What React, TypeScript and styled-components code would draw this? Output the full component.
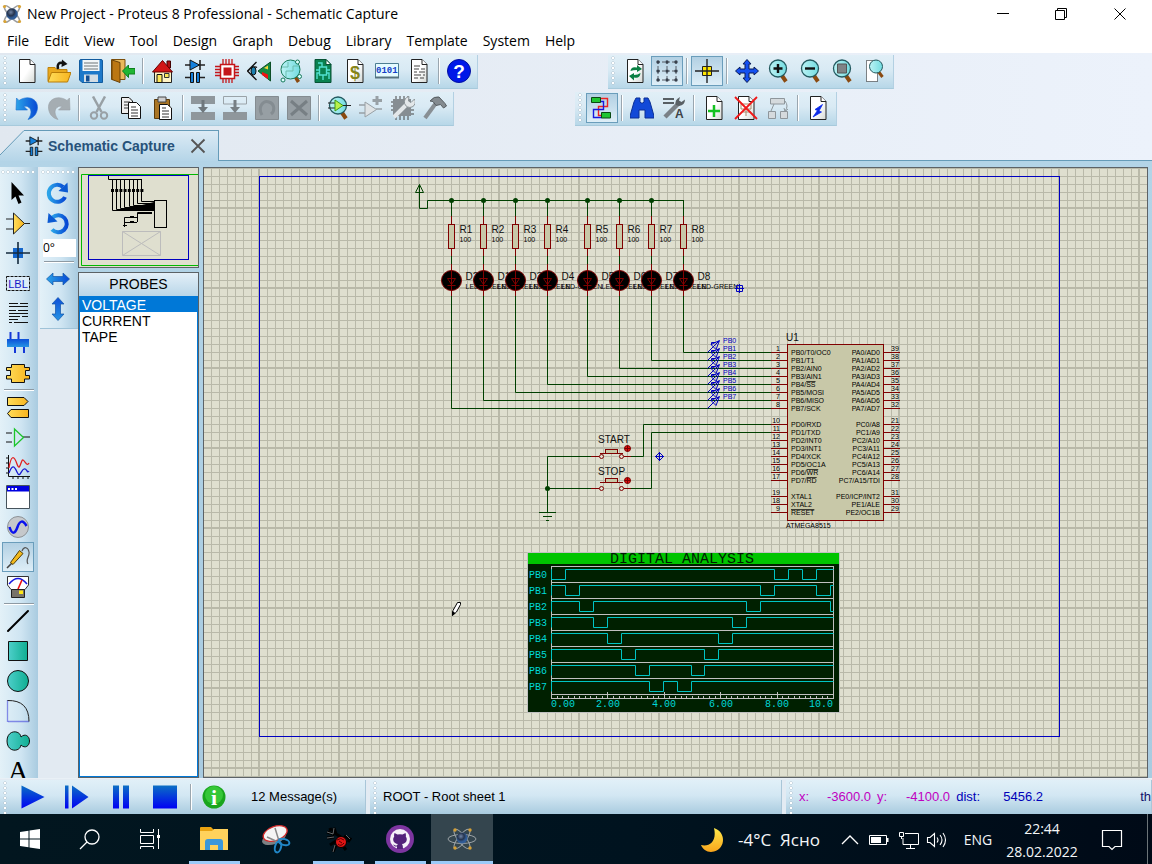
import React from "react";
import styled, { createGlobalStyle, css } from "styled-components";

const uiFont = '"Open Sans", "Noto Sans", sans-serif';
const sansFont = '"Liberation Sans", Arial, sans-serif';
const monoFont = '"Liberation Mono", monospace';

const wire = "#004000";
const pinRed = "#800000";
const markBlue = "#0000c0";

const GlobalStyle = createGlobalStyle`
  * { box-sizing: border-box; }
  body { margin: 0; overflow: hidden; font-family: ${uiFont}; color: #000; }
  button, input { font: inherit; color: inherit; }
`;

/* ---------- frame ---------- */

const Shell = styled.div`
  display: flex;
  flex-direction: column;
  height: 100vh;
  background: linear-gradient(90deg, #e1e8f0, #ecf2fb);
`;

const PaintDefs = styled.svg`
  display: block;
  width: 0;
  height: 0;
  flex: none;
`;

const TitleBar = styled.header`
  display: flex;
  align-items: center;
  flex: none;
  height: 28px;
  padding: 0 3px 0 2px;
  background: #fff;
`;

const Title = styled.h1`
  flex: 1;
  margin: 0 0 0 5px;
  font-size: 14px;
  font-weight: 400;
  line-height: 28px;
  white-space: nowrap;
`;

const WindowButton = styled.button`
  display: grid;
  place-items: center;
  width: 58px;
  height: 28px;
  padding: 0;
  border: 0;
  background: none;
`;

const MenuBar = styled.nav`
  display: flex;
  flex: none;
  height: 25px;
  background: #fff;
`;

const MenuButton = styled.button`
  padding: 0 8px 0 7px;
  border: 0;
  background: none;
  font-size: 14px;
  line-height: 26px;
`;

const Dock = styled.div`
  display: flex;
  flex-direction: column;
  flex: none;
  gap: 3px;
  padding-top: 2px;
`;

const DockRow = styled.div`
  display: flex;
`;

const Strip = styled.div<{ $offset?: number }>`
  display: flex;
  align-items: center;
  height: 34px;
  margin-left: ${(p) => p.$offset ?? 0}px;
  padding: 0 2px 2px 0;
  border-right: 1px solid #b3d0e2;
  border-bottom: 1px solid #a7cadc;
  background: linear-gradient(#e1eff7, #d9eaf4 45%, #b7d7e8);
`;

const Grip = styled.span<{ $wide?: boolean }>`
  flex: none;
  ${(p) =>
    p.$wide
      ? css`
          width: 100%;
          height: 11px;
          background: radial-gradient(circle at 2px 2px, #fff 1px, #b9c6d0 1px, transparent 2px) 1px 3px / 5px 5px repeat-x;
        `
      : css`
          align-self: stretch;
          width: 11px;
          background: radial-gradient(circle at 2px 2px, #fff 1px, #b3c0ca 1px, transparent 2px) 3px 1px / 5px 5px repeat-y;
        `}
`;

const ToolButton = styled.button<{ $on?: boolean }>`
  display: grid;
  place-items: center;
  flex: none;
  width: 32px;
  height: 30px;
  padding: 0;
  border: 1px solid ${(p) => (p.$on ? "#6a9dbb" : "transparent")};
  background: ${(p) => (p.$on ? "linear-gradient(#b2d0e3, #deeef7)" : "none")};
`;

const Divider = styled.span<{ $across?: boolean }>`
  flex: none;
  ${(p) =>
    p.$across
      ? css`
          align-self: stretch;
          height: 2px;
          margin: 1px 2px 1px 4px;
          border-top: 1px solid #8e9aa3;
          border-bottom: 1px solid #fff;
        `
      : css`
          width: 2px;
          height: 26px;
          margin: 0 3px;
          border-left: 1px solid #9aa6af;
          border-right: 1px solid #fff;
        `}
`;

const TabRow = styled.div`
  display: flex;
  flex: none;
  height: 31px;
  margin-top: 4px;
`;

const TabSlope = styled.svg`
  display: block;
  flex: none;
  width: 24px;
  height: 31px;
`;

const Tab = styled.div`
  display: flex;
  align-items: center;
  width: 195px;
  border-top: 1px solid #659bb8;
  border-right: 1px solid #659bb8;
  background: linear-gradient(#dcebf5, #b5d5e8);
`;

const TabLabel = styled.span`
  flex: 1;
  margin-left: 4px;
  color: #27527a;
  font: 700 14px/28px ${sansFont};
  white-space: nowrap;
`;

const TabClose = styled.button`
  display: grid;
  place-items: center;
  width: 24px;
  height: 28px;
  margin-right: 8px;
  padding: 0;
  border: 0;
  background: none;
`;

const TabRule = styled.span`
  flex: 1;
  border-bottom: 1px solid #659bb8;
`;

const Workspace = styled.main`
  display: flex;
  flex: 1;
  min-height: 0;
  padding: 6px 4px 0 0;
  background: linear-gradient(#b3d4e7, #a9cbe0);
`;

/* ---------- left tools ---------- */

const ToolColumns = styled.div`
  display: flex;
  flex: none;
  gap: 2px;
  width: 78px;
  overflow: hidden;
  background: #e2eaf2;
`;

const ToolColumn = styled.div`
  display: flex;
  flex-direction: column;
  align-items: center;
  align-self: flex-start;
  width: 38px;
  padding-right: 2px;
  background: linear-gradient(90deg, #e3f1f8, #cfe5f2 55%, #a9cbe0);
`;

const OrientColumn = styled(ToolColumn)`
  height: 162px;
  border-bottom: 1px solid #9fc3d8;
`;

const AngleInput = styled.input`
  width: 33px;
  height: 18px;
  margin: 1px 0 3px 3px;
  padding: 0;
  border: 0;
  background: #fff;
  font-size: 12px;
  line-height: 18px;
`;

const SidePanel = styled.aside`
  display: flex;
  flex-direction: column;
  flex: none;
  gap: 4px;
  width: 121px;
`;

const Overview = styled.svg`
  display: block;
  flex: none;
  width: 121px;
  height: 101px;
  border: 1px solid #5c6266;
  background: #dfdfcf;
`;

const Selector = styled.section`
  flex: 1;
  min-height: 0;
  border: 1px solid #5c6266;
  background: #fff;
`;

const SelectorTitle = styled.h2`
  margin: 0;
  height: 23px;
  background: linear-gradient(#e3eff8, #b9d6e8);
  font: 400 14px/23px ${sansFont};
  text-align: center;
`;

const ProbeList = styled.ul`
  height: calc(100% - 23px);
  margin: 0;
  padding: 0;
  border: 1px solid #0078d7;
  border-top: 0;
  list-style: none;
`;

const Probe = styled.button<{ $on?: boolean }>`
  display: flex;
  align-items: flex-start;
  width: 100%;
  height: 16px;
  padding: 0 2px;
  border: 0;
  background: ${(p) => (p.$on ? "#0078d7" : "none")};
  color: ${(p) => (p.$on ? "#fff" : "#000")};
  font: 14px/18px ${sansFont};
  text-align: left;
`;

const Canvas = styled.section`
  flex: 1;
  min-width: 0;
  margin-left: 4px;
  overflow: hidden;
  border: 1px solid #5c6266;
  background: #dfdfcf;
`;

const Sheet = styled.svg`
  display: block;
  width: 100%;
  height: 100%;
`;

/* ---------- status bar ---------- */

const StatusBar = styled.footer`
  display: flex;
  flex: none;
  gap: 4px;
  height: 36px;
  padding-top: 1px;
  border-top: 1px solid #e9f0f6;
  background: #e3ebf3;
  font: 13px/34px ${sansFont};
`;

const StatusPart = styled.div<{ $grow?: boolean; $width?: number }>`
  display: flex;
  align-items: center;
  flex: ${(p) => (p.$grow ? "1" : "none")};
  width: ${(p) => (p.$width ? `${p.$width}px` : "auto")};
  overflow: hidden;
  border-right: 1px solid #a9c6d8;
  background: linear-gradient(#e1f0f8, #d3e7f3 45%, #a9cbdf);
  white-space: nowrap;
`;

const StatusText = styled.span`
  display: flex;
  flex: 1;
  padding-left: 2px;
`;

const SimButton = styled.button`
  display: grid;
  place-items: center;
  width: 44px;
  height: 32px;
  padding: 0;
  border: 0;
  background: none;
`;

const Messages = styled.button`
  display: flex;
  align-items: center;
  gap: 25px;
  padding: 0 7px;
  border: 0;
  background: none;
`;

const Coordinate = styled.span<{ $width: number; $blue?: boolean; $right?: boolean }>`
  flex: none;
  width: ${(p) => p.$width}px;
  color: ${(p) => (p.$blue ? "#0000b8" : "#c000c0")};
  text-align: ${(p) => (p.$right ? "right" : "left")};
`;

const Unit = styled.span`
  margin-left: auto;
  color: #10106a;
`;

/* ---------- taskbar ---------- */

const Taskbar = styled.nav`
  display: flex;
  flex: none;
  height: 50px;
  background: linear-gradient(90deg, #02161f, #00131f 55%, #000a17);
  color: #f4f6f8;
`;

const TaskButton = styled.button<{ $app?: boolean; $open?: boolean; $active?: boolean }>`
  display: grid;
  place-items: center;
  flex: none;
  width: ${(p) => (p.$app ? 62 : 60)}px;
  padding: 0;
  border: 0;
  background-color: ${(p) => (p.$active ? "#34454e" : "transparent")};
  background-image: ${(p) => (p.$open ? "linear-gradient(#9bcaf8, #9bcaf8)" : "none")};
  background-repeat: no-repeat;
  background-position: center bottom;
  background-size: ${(p) => (p.$active ? "100%" : "51px")} 3px;
`;

const AppGroup = styled.div`
  display: flex;
  margin-left: 3px;
`;

const Tray = styled.div`
  display: flex;
  align-items: center;
  margin-left: auto;
`;

const TrayButton = styled.button<{ $width: number }>`
  display: flex;
  align-items: center;
  justify-content: center;
  flex: none;
  gap: 14px;
  width: ${(p) => p.$width}px;
  height: 50px;
  padding: 1px 0 0;
  border: 0;
  background: none;
  font-size: ${(p) => (p.$width > 100 ? 17 : 14)}px;
  line-height: 23px;
  white-space: nowrap;
`;

const ShowDesktop = styled.button`
  align-self: stretch;
  width: 5px;
  padding: 0;
  border: 0;
  border-left: 1px solid #6b7478;
  background: none;
`;

/* ---------- icons ---------- */

const Icon = ({ size = 24, box = 24, children }: { size?: number; box?: number; children: React.ReactNode }) => (
  <svg width={size} height={size} viewBox={`0 0 ${box} ${box}`} fill="none" stroke="none" aria-hidden="true">
    {children}
  </svg>
);

const Page = () => (
  <>
    <path d="M4.500.500H15l5 5V23.500H4.500Z" fill="url(#paper)" stroke="#222" />
    <path d="M15 .5V5.500H20" fill="#fff" stroke="#222" />
  </>
);

const Lens = () => (
  <>
    <path d="M14.500 16 19 22.500" stroke="#8a4a10" strokeWidth="4" />
    <circle cx="11" cy="9.500" r="8.500" fill="url(#lens)" stroke="#245a60" strokeWidth="1.300" />
  </>
);

const Atom = () => (
  <>
    <g stroke="#9b9da0" strokeWidth="1.600">
      <ellipse cx="12" cy="12" rx="13" ry="3.600" transform="rotate(48 12 12)" />
      <ellipse cx="12" cy="12" rx="13" ry="3.600" transform="rotate(-48 12 12)" />
    </g>
    <circle cx="12" cy="12" r="7" fill="url(#ball)" />
    <g fill="#dba433">
      <circle cx="3" cy="3" r="1.900" />
      <circle cx="21" cy="3" r="1.900" />
      <circle cx="3.500" cy="21" r="1.900" />
      <circle cx="21" cy="21" r="1.900" />
    </g>
  </>
);

const Schematic = () => (
  <>
    <path d="M2 6H22M17 1V11M2 18.500H9M15 18.500H22" stroke="#222" strokeWidth="1.600" />
    <path d="M7 1V11L16.500 6Z" fill="#1580dc" stroke="#111" />
    <path d="M7.500 13.500H10.500V23.500H7.500ZM13.500 13.500H16.500V23.500H13.500Z" fill="#1580dc" stroke="#111" />
  </>
);

const Curl = () => (
  <path d="M1.500 2 4 4.500C12-1 23 2 22.500 12 22 18 18.500 22 13 23.500 16.500 19 17 14 14 11.500 12 9.800 10 10 9 10.500L12.500 14H1Z" />
);

const icons = {
  newPage: <Page />,
  open: (
    <>
      <path d="M1 22V8.500H8L10 10.500H20V22Z" fill="#e9a91e" stroke="#c08108" />
      <path d="M1 23 4.500 13.500H24L20.500 23Z" fill="url(#yellow)" stroke="#b87d08" />
      <path d="M11 10C10 5 12 3 16 4" stroke="#111" strokeWidth="2.500" />
      <path d="M15 .5 20.500 5 14.500 8Z" fill="#111" />
    </>
  ),
  save: (
    <>
      <path d="M.500 2Q.500.500 2 .5H22Q23.500.500 23.500 2V23.500H3L.500 21Z" fill="#1c78c9" stroke="#125b9e" />
      <path d="M3.500 1H20.500V12H3.500Z" fill="#f2f6f8" />
      <path d="M5 4H19M5 7H19M5 10H19" stroke="#6c7479" />
      <path d="M5 15.500H19V23H5Z" fill="#d3dde4" />
      <path d="M7 16.500H10.500V22.500H7Z" fill="#124f94" />
    </>
  ),
  exit: (
    <>
      <path d="M.500.500H14V20.500H.500Z" fill="#e9b95c" stroke="#7b4e0b" />
      <path d="M1 1 9 3.500V23.500L1 20.500Z" fill="#bb7713" stroke="#6a4209" />
      <path d="M11.500 12 17.500 6V9.500H24V15H17.500V18.500Z" fill="#20b634" stroke="#0e7f1d" />
    </>
  ),
  home: (
    <>
      <path d="M3.500 12H20.500V23.500H3.500Z" fill="#fff4c5" stroke="#222" />
      <path d="M16 2H19.500V9H16Z" fill="#b11212" stroke="#400" />
      <path d="M11.500 1.500 1.500 13H21.500Z" fill="#d21616" stroke="#680000" />
      <path d="M6 15.500H11V23.500H6Z" fill="#ffe85a" stroke="#111" />
      <path d="M13.500 14.500H18V18.500H13.500Z" fill="#ffe85a" stroke="#333" />
    </>
  ),
  schematic: <Schematic />,
  chip: (
    <>
      <path d="M8 0V24M11 0V24M14 0V24M17 0V24M0 7.500H24M0 10.500H24M0 13.500H24M0 16.500H24" stroke="#c4161a" strokeWidth="1.300" />
      <path d="M5.500 5.500H19.500V19.500H5.500Z" fill="#fff" stroke="#c4161a" strokeWidth="1.500" />
      <path d="M8.500 8.500H16.500V16.500H8.500Z" fill="#c4161a" />
    </>
  ),
  viewer: (
    <>
      <path d="M9.500 3 .500 12 9.500 21M1 12C4 8 8 7 10 8.500" stroke="#111" strokeWidth="1.300" />
      <ellipse cx="6.500" cy="12" rx="2.500" ry="4" fill="#1a7fae" stroke="#111" />
      <path d="M11 12 23.500 3V22Z" fill="#138a42" stroke="#0c4e26" />
      <path d="M15 13 21 15.500V20L15 16Z" fill="#e11" />
      <path d="M17 9 21 6.500V10.500Z" fill="#f6d73c" />
    </>
  ),
  pcbLens: (
    <>
      <path d="M15.500 16.500 19.500 23" stroke="#8a4a10" strokeWidth="3.500" />
      <circle cx="11.500" cy="10.500" r="9.500" fill="url(#lens)" stroke="#167a5a" />
      <path d="M3 8H9V3M20 7H14V12H7V18" stroke="#6cbcae" />
      <g fill="#dff" stroke="#167a5a">
        <circle cx="18.500" cy="3" r="2" />
        <circle cx="4" cy="21" r="2" />
        <circle cx="20.500" cy="17.500" r="2" />
      </g>
    </>
  ),
  pcbPage: (
    <>
      <path d="M4 .5H15L20 5.500V23.500H4Z" fill="#0a8250" stroke="#075234" />
      <path d="M15 .5V5.500H20Z" fill="#fff" stroke="#075234" />
      <path d="M8.500 8H15.500V16H8.500ZM8.500 11H5M15.500 11H19M8.500 14H6V20M15.500 14H18V20M11 8V4H7M12 16V21" stroke="#52e0cf" strokeWidth="1.400" />
    </>
  ),
  bill: (
    <>
      <Page />
      <text x="12" y="20" textAnchor="middle" fontFamily="Liberation Sans" fontWeight="700" fontSize="18" fill="#87851a">$</text>
    </>
  ),
  binary: (
    <>
      <path d="M.500 4.500H23.500V18.500H.500Z" fill="#e4fbff" stroke="#4d7d92" />
      <path d="M0 18.500H24" stroke="#56727f" strokeWidth="2" />
      <text x="1" y="14" fontFamily="Liberation Mono" fontWeight="700" fontSize="9" fill="#1440c8">0101</text>
    </>
  ),
  report: (
    <>
      <Page />
      <path d="M7 7H13M7 10H12M14 10H18M7 13H10M12 13H18M7 16H14M16 16H18M7 19H11M13 19H17" stroke="#444" strokeWidth="1.200" />
    </>
  ),
  help: (
    <>
      <circle cx="12" cy="12" r="11.500" fill="#0018e8" stroke="#0010a0" />
      <text x="12" y="19" textAnchor="middle" fontFamily="Liberation Sans" fontWeight="700" fontSize="19" fill="#fff">?</text>
    </>
  ),
  undo: (
    <g fill="url(#blueH)" stroke="#1c6fd0" strokeWidth=".6"><Curl /></g>
  ),
  redo: (
    <g fill="#a5adb2" stroke="#98a0a5" strokeWidth=".6" transform="translate(24 0) scale(-1 1)"><Curl /></g>
  ),
  cut: (
    <g stroke="#98a0a5">
      <path d="M6 .5 14.500 16M18 .5 9.500 16" strokeWidth="2.500" />
      <circle cx="7" cy="19.500" r="3.200" strokeWidth="2" />
      <circle cx="17" cy="19.500" r="3.200" strokeWidth="2" />
    </g>
  ),
  copy: (
    <>
      <path d="M2.500 1.500H10L13.500 5V17.500H2.500Z" fill="#eee" stroke="#111" />
      <path d="M5 6H11M5 9H11M5 12H11" stroke="#333" />
      <path d="M9.500 6.500H17.500L21.500 10.500V22.500H9.500Z" fill="#fff" stroke="#111" />
      <path d="M12 11H17M12 14H19M12 17H19M12 20H19" stroke="#333" />
    </>
  ),
  paste: (
    <>
      <path d="M3.500 3.500H18.500V22.500H3.500Z" fill="#a97524" stroke="#5a3b0c" />
      <path d="M7 1H15V6H7Z" fill="#cfcfcf" stroke="#444" />
      <path d="M8.500 8.500H16.500L20.500 12V23.500H8.500Z" fill="#fff" stroke="#111" />
      <path d="M11 12H15M11 15H18M11 18H18M11 21H18" stroke="#333" />
    </>
  ),
  blockCopy: (
    <>
      <path d="M0 0H24V8H0ZM0 16H24V24H0Z" fill="#8f979c" />
      <path d="M12 4V13" stroke="#6f777c" strokeWidth="3" />
      <path d="M7 11H17L12 17Z" fill="#6f777c" />
    </>
  ),
  blockMove: (
    <>
      <path d="M.500.500H23.500V8H.500Z" stroke="#9aa3a8" />
      <path d="M0 16H24V24H0Z" fill="#8f979c" />
      <path d="M12 4V13" stroke="#777f84" strokeWidth="3" />
      <path d="M7 11H17L12 17Z" fill="#777f84" />
    </>
  ),
  blockRotate: (
    <>
      <path d="M.500.500H23.500V23.500H.500Z" fill="#979fa4" stroke="#848c91" />
      <path d="M7 19C2 10 9 4 14 6 20 8 20 15 16 18" stroke="#848c91" strokeWidth="3" />
    </>
  ),
  blockDelete: (
    <>
      <path d="M.500.500H23.500V23.500H.500Z" fill="#979fa4" stroke="#848c91" />
      <path d="M4 5 20 19M20 5 4 19" stroke="#777f84" strokeWidth="3" />
    </>
  ),
  pick: (
    <>
      <Lens />
      <path d="M1 7H8M1 12H8M16 9.500H24" stroke="#222" />
      <path d="M8 4V15L16 9.500Z" fill="#b9f04c" stroke="#3f9d17" />
    </>
  ),
  makePart: (
    <>
      <path d="M0 9H6M0 17H6M17 13H23" stroke="#98a0a5" strokeWidth="1.500" />
      <path d="M6 6V21L17.500 13.500Z" fill="#dfe3e5" stroke="#98a0a5" />
      <path d="M18 0V9M13.500 4.500H23" stroke="#98a0a5" strokeWidth="3" />
    </>
  ),
  packageTool: (
    <>
      <path d="M2 3H20V20H2Z" fill="#868d92" />
      <path d="M5 0V3M9 0V3M13 0V3M17 0V3M5 20V24M9 20V24M13 20V24M17 20V24M0 6H2M0 10H2M0 14H2M20 14H23M20 18H23" stroke="#444" />
      <path d="M3 21 16 8" stroke="#e3e7e9" strokeWidth="4" />
      <path d="M23.500 3A5.500 5.500 0 1 1 18 .5L17.500 5 20 6.500Z" fill="#e3e7e9" stroke="#8a9296" />
    </>
  ),
  hammer: (
    <>
      <path d="M13 7 2 22" stroke="#888f94" strokeWidth="4" />
      <path d="M7 5Q11 0 16 1L22 7.500 23.500 10 20.500 12 17.500 8.500 13 9.500 10 5.500Z" fill="#848b90" stroke="#555c60" />
    </>
  ),
  redraw: (
    <>
      <Page />
      <path d="M7.500 12Q8 7 14 8.500V6L19 10 14 13V11Q10 11 7.500 12ZM17.500 14Q17 20 11 18.500V21.500L6 17 11 14V16Q15 16 17.500 14Z" fill="#0b7f43" />
    </>
  ),
  grid: (
    <>
      <path d="M2 3H22M2 12H22M2 21H22M3 2V22M12 2V22M21 2V22" stroke="#565c66" strokeDasharray="3 2" />
      <g fill="#38404c">
        {[3, 12, 21].map((y) => [3, 12, 21].map((x) => <circle key={`${x}${y}`} cx={x} cy={y} r="1.700" />))}
      </g>
    </>
  ),
  origin: (
    <>
      <path d="M7.500 7.500H16.500V16.500H7.500Z" fill="#ffe600" stroke="#222" />
      <path d="M12 0V24M0 12H24" stroke="#222" strokeWidth="1.400" />
    </>
  ),
  pan: (
    <path d="M12 .5 16 5H14V10H19V8L23.500 12 19 16V14H14V19H16L12 23.500 8 19H10V14H5V16L.500 12 5 8V10H10V5H8Z" fill="#1450f0" stroke="#0a1c58" />
  ),
  zoomIn: (
    <><Lens /><path d="M11 5V14M6.500 9.500H15.500" stroke="#111" strokeWidth="2.400" /></>
  ),
  zoomOut: (
    <><Lens /><path d="M6 9.500H16" stroke="#111" strokeWidth="2.400" /></>
  ),
  zoomAll: (
    <><Lens /><path d="M6.500 5H15.500V14H6.500Z" fill="#7f8487" stroke="#555" /></>
  ),
  zoomArea: (
    <>
      <path d="M3.500 1.500H14.500V22.500H3.500Z" fill="#fff" />
      <path d="M3.500 1.500H14.500V22.500H3.500Z" stroke="#111" strokeDasharray="1 1" />
      <path d="M15 12 19.500 18" stroke="#8a4a10" strokeWidth="3" />
      <circle cx="13" cy="7.500" r="6.500" fill="url(#lens)" stroke="#245a60" />
    </>
  ),
  autoRoute: (
    <>
      <path d="M10 2.500H17.500V10.500H8.500V19.500H13" stroke="#e22" strokeWidth="1.400" />
      <path d="M10 5.500H13.500V13.500H3.500V21.500H12" stroke="#1818e0" strokeWidth="1.400" />
      <path d="M1.500 1.500H10.500V6.500H1.500ZM11.500 16.500H20.500V22H11.500Z" fill="#1fc632" stroke="#0a4912" />
    </>
  ),
  find: (
    <path d="M6 2H10V6L11 7H13L14 6V2H18L20 6 24 20V22H15V14H9V22H0V20L4 6Z" fill="#1249d8" stroke="#0a2f96" />
  ),
  property: (
    <>
      <path d="M1 3H12M1 7H12" stroke="#585f64" strokeWidth="2" />
      <path d="M3 21 17 7" stroke="#7a8187" strokeWidth="4.500" />
      <path d="M14 9Q12 4 18 1L17 4.500 19.500 6 23 3.500Q23 9 17 10Z" fill="#596065" />
      <text x="13" y="22" fontFamily="Liberation Sans" fontWeight="700" fontSize="12" fill="#3e4347">A</text>
    </>
  ),
  newSheet: (
    <><Page /><path d="M12 9V21M6 15H18" stroke="#14c221" strokeWidth="2.500" /></>
  ),
  deleteSheet: (
    <>
      <Page />
      <path d="M7 8H17V13H7ZM9 16H17M12 13V20" stroke="#a88a6a" />
      <path d="M1 1 23 23M23 1 1 23" stroke="#f01818" strokeWidth="1.800" />
    </>
  ),
  hierarchy: (
    <>
      <path d="M4.500 2.500H18.500V8H4.500ZM2.500 15.500H9.500V22.500H2.500ZM14.500 15.500H21.500V22.500H14.500Z" fill="#d5dadd" stroke="#8e969b" />
      <path d="M8 8 5 15M19 5Q23 10 19 15M18 12 19 15.500 22 13" stroke="#8e969b" />
    </>
  ),
  electrical: (
    <><Page /><path d="M16.500 8.500 9 13.500 11.500 14.500 7 21 15.500 16 13 15Z" fill="#0b2ae8" stroke="#0b2ae8" strokeWidth=".8" /></>
  ),
  select: <path d="M5.500 1V19L9.500 15.500 12.500 23 15.500 21.500 12.500 14.500H18Z" fill="#000" />,
  component: (
    <><path d="M0 8H8M0 18H8M18 12.500H24" stroke="#222" /><path d="M7.500 2V23L18.500 12.500Z" fill="url(#yellow)" stroke="#222" /></>
  ),
  junction: (
    <><path d="M7 7H17V17H7Z" fill="#1466cc" /><path d="M12 1V23M0 12H24" stroke="#152a3c" strokeWidth="1.600" /></>
  ),
  label: (
    <>
      <path d="M.500 5.500H23.500V19.500H.500Z" fill="#dcecf8" stroke="#111" strokeDasharray="3 1" />
      <text x="12" y="17" textAnchor="middle" fontFamily="Liberation Sans" fontSize="11" fill="#1818c8">LBL</text>
    </>
  ),
  script: (
    <path d="M3 2.500H12M14 2.500H22M3 5.500H22M3 9.500H10M12 9.500H22M3 12.500H22M3 15.500H14M16 15.500H22M3 18.500H12M3 21.500H6M8 21.500H22" stroke="#111" />
  ),
  bus: (
    <>
      <path d="M4.500 1V9M12.500 1V9M9 15V22M18 15V22" stroke="#1538d8" strokeWidth="2" />
      <path d="M1 8H23V16H1Z" fill="url(#blueV)" />
    </>
  ),
  subcircuit: (
    <path d="M5.500 3.500H18.500V6.500H23.500V9.500H19.500V14.500H23.500V18H18.500V21.500H5.500V18H.500V14.500H4.500V9.500H.500V6.500H5.500Z" fill="url(#yellow)" stroke="#111" />
  ),
  terminal: (
    <path d="M1.500 2.500H18L22 6.500 18 10.500H1.500ZM5 14.500H22.500V22.500H5L1.500 18.500Z" fill="url(#yellow)" stroke="#111" />
  ),
  pin: (
    <><path d="M0 8H6M0 17H6M17 12H24" stroke="#111" /><path d="M8.500 4V21L17.500 12.500Z" stroke="#1cc52c" strokeWidth="1.300" /></>
  ),
  chart: (
    <>
      <path d="M2.500 0V21.500H24M0 3H2M0 8H2M0 13H2M0 18H2M7 21V24M12 21V24M17 21V24M22 21V24" stroke="#111" />
      <path d="M3 13C5 0 8 0 11 9S15 4 17 5 21 12 23 8" stroke="#e12020" strokeWidth="1.300" />
      <path d="M3 18C6 10 8 10 11 17S15 15 18 14 21 19 23 16" stroke="#1818d0" strokeWidth="1.300" />
    </>
  ),
  popup: (
    <>
      <path d="M.500.500H23.500V23.500H.500Z" fill="#fff" stroke="#46535c" />
      <path d="M1 1H23V6.500H1Z" fill="#0000e0" />
      <path d="M2 4H12" stroke="#fff" strokeWidth="2" strokeDasharray="2 1.500" />
    </>
  ),
  generator: (
    <>
      <circle cx="12" cy="12" r="10.500" fill="#c5c8cb" stroke="#8d9296" />
      <path d="M3.500 12C6 20 9 19 11.500 12S17 5 20.500 11" stroke="#0a12ee" strokeWidth="2.500" />
    </>
  ),
  probe: (
    <>
      <path d="M1 23 7 17" stroke="#444" strokeWidth="1.600" />
      <path d="M4.500 17.500 13.500 5.500 17 8.500 7 19.500Z" fill="#f2b91c" stroke="#4f3b06" />
      <path d="M16 6C18 1 22 2 23 7S19 14 22 19" stroke="#555" strokeWidth="1.200" />
    </>
  ),
  instrument: (
    <>
      <path d="M1.500 1.500H22.500V10L19 14.500H5L1.500 10Z" fill="#fff" stroke="#333" />
      <path d="M3 9Q12-2 21 9" stroke="#1717e0" strokeWidth="1.500" />
      <path d="M12 14 16 5" stroke="#e11" strokeWidth="1.600" />
      <path d="M5.500 14.500H18.500V22.500H5.500Z" fill="#77736a" stroke="#222" />
      <path d="M13 15.500H17V19H13Z" fill="#ffe815" />
    </>
  ),
  line: <path d="M2 22 22 2" stroke="#000" strokeWidth="2" strokeLinecap="round" />,
  box: <path d="M2.500 2.500H21.500V21.500H2.500Z" fill="url(#teal)" stroke="#111" />,
  circle: <circle cx="12" cy="12" r="10.500" fill="url(#teal)" stroke="#111" />,
  arc: (
    <>
      <path d="M1.500 1.500V22.500H23" stroke="#2828d8" strokeDasharray="1 1" strokeWidth="1.300" />
      <path d="M1.500 1.500Q23 1 23 22.500" stroke="#222" />
    </>
  ),
  path: (
    <path d="M15 8C14 .5 1 .5 1 12S14 23.500 15 16C19 20 23.500 17 23.500 12S19 4 15 8Z" fill="url(#teal)" stroke="#111" />
  ),
  text: <text x="12" y="21" textAnchor="middle" fontFamily="Liberation Serif" fontSize="28" fill="#000">A</text>,
  clockwise: (
    <>
      <path d="M19 16A8.500 8.500 0 1 1 17 6" stroke="url(#blueH)" strokeWidth="4" />
      <path d="M21.500 1.500 22 11.500 12.500 10Z" fill="#0b5ad2" />
    </>
  ),
  anticlockwise: (
    <>
      <path d="M6 18.500A8.500 8.500 0 1 0 6.500 6.500" stroke="url(#blueH)" strokeWidth="4" />
      <path d="M2.500 2 1.500 12 11.500 10.500Z" fill="#0b5ad2" />
    </>
  ),
  mirrorX: <path d="M.500 12 7 6V9.500H17V6L23.500 12 17 18V14.500H7V18Z" fill="url(#blueH)" stroke="#1255a8" strokeWidth=".7" />,
  mirrorY: <path d="M12 .5 18 7H14.500V17H18L12 23.500 6 17H9.500V7H6Z" fill="url(#blueV)" stroke="#1255a8" strokeWidth=".7" />,
} as const;

type IconName = keyof typeof icons;
type Tool = { icon: IconName; label: string; on?: boolean } | null;

const t = (icon: IconName, label: string, on = false): Tool => ({ icon, label, on });

const fileTools: Tool[] = [
  t("newPage", "New project"), t("open", "Open project"), t("save", "Save project"), t("exit", "Close project"), null,
  t("home", "Home page"), t("schematic", "Schematic capture"), t("chip", "PCB layout"), t("viewer", "3D visualizer"),
  t("pcbLens", "Gerber viewer"), t("pcbPage", "Design explorer"), t("bill", "Bill of materials"), t("binary", "Source code"),
  t("report", "Project notes"), null, t("help", "Help"),
];
const viewTools: Tool[] = [
  t("redraw", "Redraw display"), t("grid", "Toggle grid", true), null, t("origin", "Toggle false origin", true), null,
  t("pan", "Center at cursor"), t("zoomIn", "Zoom in"), t("zoomOut", "Zoom out"), t("zoomAll", "Zoom to view sheet"),
  t("zoomArea", "Zoom to area"),
];
const editTools: Tool[] = [
  t("undo", "Undo"), t("redo", "Redo"), null, t("cut", "Cut"), t("copy", "Copy"), t("paste", "Paste"), null,
  t("blockCopy", "Block copy"), t("blockMove", "Block move"), t("blockRotate", "Block rotate"), t("blockDelete", "Block delete"), null,
  t("pick", "Pick parts"), t("makePart", "Make device"), t("packageTool", "Packaging tool"), t("hammer", "Decompose"),
];
const designTools: Tool[] = [
  t("autoRoute", "Wire autorouter", true), null, t("find", "Search and tag"), t("property", "Property assignment"), null,
  t("newSheet", "New sheet"), t("deleteSheet", "Remove sheet"), t("hierarchy", "Exit to parent"), null,
  t("electrical", "Electrical rules check"),
];
const modeTools: Tool[] = [
  t("select", "Selection"), t("component", "Component"), t("junction", "Junction dot"), t("label", "Wire label"),
  t("script", "Text script"), t("bus", "Buses"), t("subcircuit", "Subcircuit"), null,
  t("terminal", "Terminals"), t("pin", "Device pins"), t("chart", "Graph"), t("popup", "Active popup"),
  t("generator", "Generator"), t("probe", "Probe", true), t("instrument", "Instruments"), null,
  t("line", "2D line"), t("box", "2D box"), t("circle", "2D circle"), t("arc", "2D arc"), t("path", "2D path"), t("text", "2D text"),
];

const Tools = ({ items, across }: { items: Tool[]; across?: boolean }) => (
  <>
    {items.map((item, i) =>
      item ? (
        <ToolButton key={item.icon} aria-label={item.label} aria-pressed={item.on || undefined} $on={item.on}>
          <Icon>{icons[item.icon]}</Icon>
        </ToolButton>
      ) : (
        <Divider key={`divider${i}`} $across={across} />
      )
    )}
  </>
);

/* ---------- schematic ---------- */

// Top left of the visible area, in schematic coordinates.
const view = { x: 204, y: 168 };

const branches = [
  { x: 451, r: "R1", d: "D2" },
  { x: 483, r: "R2", d: "D1" },
  { x: 515, r: "R3", d: "D3" },
  { x: 547, r: "R4", d: "D4" },
  { x: 587, r: "R5", d: "D5" },
  { x: 619, r: "R6", d: "D6" },
  { x: 651, r: "R7", d: "D7" },
  { x: 683, r: "R8", d: "D8" },
];

// [y, number, name, overlined part]
type Pin = [number, number, string, string?];
const leftPins: Pin[] = [
  [352, 1, "PB0/T0/OC0"], [360, 2, "PB1/T1"], [368, 3, "PB2/AIN0"], [376, 4, "PB3/AIN1"],
  [384, 5, "PB4/", "SS"], [392, 6, "PB5/MOSI"], [400, 7, "PB6/MISO"], [408, 8, "PB7/SCK"],
  [424, 10, "PD0/RXD"], [432, 11, "PD1/TXD"], [440, 12, "PD2/INT0"], [448, 13, "PD3/INT1"],
  [456, 14, "PD4/XCK"], [464, 15, "PD5/OC1A"], [472, 16, "PD6/", "WR"], [480, 17, "PD7/", "RD"],
  [496, 19, "XTAL1"], [504, 18, "XTAL2"], [512, 9, "", "RESET"],
];
const rightPins: Pin[] = [
  [352, 39, "PA0/AD0"], [360, 38, "PA1/AD1"], [368, 37, "PA2/AD2"], [376, 36, "PA3/AD3"],
  [384, 35, "PA4/AD4"], [392, 34, "PA5/AD5"], [400, 33, "PA6/AD6"], [408, 32, "PA7/AD7"],
  [424, 21, "PC0/A8"], [432, 22, "PC1/A9"], [440, 23, "PC2/A10"], [448, 24, "PC3/A11"],
  [456, 25, "PC4/A12"], [464, 26, "PC5/A13"], [472, 27, "PC6/A14"], [480, 28, "PC7/A15/TDI"],
  [496, 31, "PE0/ICP/INT2"], [504, 30, "PE1/ALE"], [512, 29, "PE2/OC1B"],
];

const PartName = styled.text`
  font: 10px ${sansFont};
  fill: #101010;
`;

const SmallText = styled.text<{ $blue?: boolean }>`
  font: 7px ${sansFont};
  fill: ${(p) => (p.$blue ? "#0000c0" : "#000")};
`;

const Overlined = styled.tspan`
  text-decoration: overline;
`;

const GraphText = styled.text<{ $title?: boolean }>`
  font: ${(p) => (p.$title ? 15 : 10)}px ${monoFont};
  fill: ${(p) => (p.$title ? "#001c00" : "#00d8d8")};
`;

const Branch = ({ x, r, d, drop }: { x: number; r: string; d: string; drop: number }) => (
  <g transform={`translate(${x}.5 0)`}>
    <path d={`M0 200.500V216M0 256V264M0 296V${drop}.5H${771 - x}`} stroke={wire} />
    <path d="M0 216V224M0 249V256M0 264V296" stroke={pinRed} />
    <rect x="-3" y="224.500" width="6" height="24" fill="#c8c8a8" stroke={pinRed} />
    <PartName x="8" y="233">{r}</PartName>
    <SmallText x="8" y="242">100</SmallText>
    <circle cy="280.500" r="10" fill="#000" stroke={pinRed} />
    <path d="M0 270V291M-4 278.500H4L0 284.500ZM-4 285.500H4" stroke={pinRed} />
    <PartName x="14" y="280">{d}</PartName>
    <SmallText x="14" y="289">LED-GREEN</SmallText>
  </g>
);

const PushButton = ({ y, cap, name }: { y: number; cap: number; name: string }) => (
  <g transform={`translate(0 ${y}.5)`}>
    <path d={`M591 0H599M624 0H631M600 ${-cap}H623`} stroke={pinRed} />
    <rect x="605.500" y={-cap - 4} width="12" height="4" fill="#c8c8a8" stroke={pinRed} />
    <circle cx="601.500" r="2" fill="#dfdfcf" stroke={pinRed} />
    <circle cx="621.500" r="2" fill="#dfdfcf" stroke={pinRed} />
    <circle cx="627.500" cy="-8" r="3" fill="#e81010" stroke="#700" />
    <path d="M627.500-11V-5M624.500-8H630.500" stroke="#700" />
    <PartName x="598" y="-14">{name}</PartName>
  </g>
);

const Chip = () => (
  <g>
    <rect x="787.500" y="344.500" width="96" height="176" fill="#c8c8a8" stroke={pinRed} />
    <PartName x="786" y="341">U1</PartName>
    <SmallText x="786" y="528">ATMEGA8515</SmallText>
    {leftPins.map(([y, n, name, bar]) => (
      <g key={n}>
        <path d={`M771 ${y}.5H787`} stroke={pinRed} />
        <SmallText x="780" y={y - 1} textAnchor="end">{n}</SmallText>
        <SmallText x="791" y={y + 3}>{name}{bar && <Overlined>{bar}</Overlined>}</SmallText>
      </g>
    ))}
    {rightPins.map(([y, n, name]) => (
      <g key={n}>
        <path d={`M884 ${y}.5H900`} stroke={pinRed} />
        <SmallText x="891" y={y - 1}>{n}</SmallText>
        <SmallText x="880" y={y + 3} textAnchor="end">{name}</SmallText>
      </g>
    ))}
  </g>
);

// Intervals in which each output is low, in half-second steps of 14 units.
const lows: [number, number][][] = [
  [[0, 14], [223, 237], [251, 265]],
  [[14, 28], [209, 223], [265, 279]],
  [[28, 42], [195, 209], [279, 282]],
  [[42, 56], [181, 195]],
  [[56, 70], [167, 181]],
  [[70, 84], [153, 167]],
  [[84, 98], [140, 153]],
  [[98, 112], [126, 140]],
];

const trace = (row: [number, number][]) => {
  let d = "M0 10V0";
  row.forEach(([from, to]) => {
    d += `H${from}V10H${to}${to < 282 ? "V0" : ""}`;
  });
  return row[row.length - 1][1] < 282 ? `${d}H282` : d;
};

const AnalysisGraph = () => (
  <g>
    <rect x="527.500" y="552.500" width="312" height="160" fill="#002000" stroke="#c0c0c0" />
    <rect x="528" y="553" width="311" height="11" fill="#00c400" />
    <GraphText $title x="610" y="563">DIGITAL ANALYSIS</GraphText>
    <rect x="551.500" y="566.500" width="282" height="132" stroke="#c0c0c0" fill="none" />
    {lows.map((row, i) => (
      <g key={i}>
        <path d={`M551 ${582 + 16 * i}.5H834`} stroke="#c0c0c0" />
        <path d={trace(row)} transform={`translate(551.500 ${569 + 16 * i}.5)`} stroke="#00c4c4" fill="none" />
        <GraphText x="529" y={578 + 16 * i}>{`PB${i}`}</GraphText>
      </g>
    ))}
    {Array.from({ length: 50 }, (_, i) => (
      <path key={i} d={`M${Math.round(551 + i * 5.64)}.5 ${i % 10 ? 696 : 692}V699`} stroke="#c0c0c0" />
    ))}
    {[[551, "0.00"], [596, "2.00"], [652, "4.00"], [709, "6.00"], [765, "8.00"], [809, "10.0"]].map(([x, s]) => (
      <GraphText key={s} x={x} y="707">{s}</GraphText>
    ))}
  </g>
);

const SchematicSheet = () => (
  <Sheet role="img" aria-label="Root sheet 1">
    <defs>
      <pattern id="minor" x="3" y="0" width="8" height="8" patternUnits="userSpaceOnUse">
        <path d="M0 0H8V1H1V8H0Z" fill="#b9b9a9" />
      </pattern>
      <pattern id="major" x="18" y="47" width="80" height="80" patternUnits="userSpaceOnUse">
        <path d="M0 0H80V2H2V80H0Z" fill="#b9b9a9" />
      </pattern>
    </defs>
    <g transform={`translate(${-view.x} ${-view.y})`}>
      <rect x="204" y="168" width="3000" height="2000" fill="url(#minor)" />
      <rect x="204" y="168" width="3000" height="2000" fill="url(#major)" />
      <rect x="259.500" y="176.500" width="800" height="560" fill="none" stroke={markBlue} />

      <g fill="none">
        <path d="M419.500 192V208.500H427.500V200.500H684M419.500 192.500V184.500M415.500 192.500H423.500L419.500 184.500Z" stroke={wire} />
        {branches.map((b, i) => (
          <Branch key={b.r} {...b} drop={408 - 8 * i} />
        ))}
        {branches.slice(0, 7).map((b) => (
          <circle key={b.r} cx={b.x + 0.5} cy="200.500" r="2.500" fill={wire} />
        ))}
        <path d="M591 456.500H547.500V512M547 488.500H591M631 456.500H643.500V424.500H771M631 488.500H651.500V432.500H771" stroke={wire} />
        <path d="M539 512.500H556M543 516.500H552M546 520.500H549" stroke={wire} />
        <circle cx="547.500" cy="488.500" r="2.500" fill={wire} />
      </g>
      <PushButton y={456} cap={3} name="START" />
      <PushButton y={488} cap={6} name="STOP" />
      <Chip />

      {branches.map((b, i) => (
        <g key={b.r} transform={`translate(0 ${8 * i})`}>
          <path d="M707.500 352.500 719 341M711 344.500 719.500 340.500 716 349.500M711 344.500 716 349.500M711.500 345V342.500H715" stroke={markBlue} fill="none" />
          <SmallText $blue x="723" y="343">{`PB${i}`}</SmallText>
        </g>
      ))}
      <path d="M736.500 285.500H742.500V291.500H736.500ZM735 288.500H744M739.500 284V293M659.500 452.500 663.500 456.500 659.500 460.500 655.500 456.500ZM655 456.500H664M659.500 452V461" stroke={markBlue} fill="none" />
      <AnalysisGraph />
      <path d="M452.500 615.500 453 610.500 457.500 602.500H460.500V604.500L456.500 612Z" fill="#fff" stroke="#000" />
      <path d="M452 616V611L455.500 613Z" fill="#000" />
    </g>
  </Sheet>
);

const OverviewMap = () => (
  <Overview role="img" aria-label="Sheet overview" viewBox="79 168 119 99">
    <path d="M198 174.500H81.500V265.500H198" fill="none" stroke="#00b800" />
    <rect x="88.500" y="175.500" width="100" height="84" fill="none" stroke={markBlue} />
    <path d="M108.500 176V179.500H142M112.500 179V210.500H154M116.500 179V209.500H154M120.500 179V208.500H154M124.500 179V207.500H154M129.500 179V206.500H154M133.500 179V205.500H154M137.500 179V203.500H154M141.500 179V201.500H154" fill="none" stroke="#000" />
    <path d="M111 190.500H144" stroke="#000" strokeWidth="3" strokeDasharray="3 1.200" />
    <path d="M134 207 154 202V207Z" fill="#000" />
    <path d="M152 212.500H137.500V222M152 213.500H138M124.500 227V217.500H137M124 222.500H137M130 216.500H134M130 221.500H134M123 225.500H127" fill="none" stroke="#000" />
    <rect x="154.500" y="200.500" width="12" height="27" fill="none" stroke="#000" />
    <path d="M122.500 231.500H160.500V255.500H122.500ZL160.500 255.500M160.500 231.500 122.500 255.500" fill="none" stroke="#bcbcbc" />
  </Overview>
);

/* ---------- page ---------- */

const menus = ["File", "Edit", "View", "Tool", "Design", "Graph", "Debug", "Library", "Template", "System", "Help"];

const App = () => (
  <Shell>
    <GlobalStyle />
    <PaintDefs aria-hidden="true">
      <defs>
        <linearGradient id="paper" x1="0" y1="0" x2="1" y2="1"><stop offset=".5" stopColor="#fff" /><stop offset="1" stopColor="#d4d8d4" /></linearGradient>
        <linearGradient id="lens"><stop stopColor="#bdf3f5" /><stop offset="1" stopColor="#72dce0" /></linearGradient>
        <linearGradient id="yellow"><stop stopColor="#ffdd5a" /><stop offset="1" stopColor="#f7b41e" /></linearGradient>
        <linearGradient id="teal"><stop stopColor="#4ecfca" /><stop offset="1" stopColor="#0fae92" /></linearGradient>
        <linearGradient id="blueH"><stop stopColor="#2ba4e8" /><stop offset="1" stopColor="#0648d4" /></linearGradient>
        <linearGradient id="blueV" x2="0" y2="1"><stop stopColor="#0d4fd8" /><stop offset="1" stopColor="#2694e4" /></linearGradient>
        <linearGradient id="sim" x2="0" y2="1"><stop stopColor="#0b6fc4" /><stop offset="1" stopColor="#0000f4" /></linearGradient>
        <linearGradient id="tab" x2="0" y2="1"><stop stopColor="#dcebf5" /><stop offset="1" stopColor="#b5d5e8" /></linearGradient>
        <linearGradient id="moon" x2="0" y2="1"><stop stopColor="#ffe94a" /><stop offset="1" stopColor="#f9a51c" /></linearGradient>
        <radialGradient id="ball" cx=".4" cy=".35"><stop stopColor="#6f84a6" /><stop offset=".6" stopColor="#26344e" /><stop offset="1" stopColor="#2f5b96" /></radialGradient>
      </defs>
    </PaintDefs>

    <TitleBar>
      <Icon size={20}><Atom /></Icon>
      <Title>New Project - Proteus 8 Professional - Schematic Capture</Title>
      <WindowButton aria-label="Minimize"><Icon size={14} box={14}><path d="M0 6.500H12" stroke="#000" /></Icon></WindowButton>
      <WindowButton aria-label="Restore"><Icon size={14} box={14}><path d="M.500 3.500H9.500V12.500H.500ZM2.500 3V1.500H11.500V10.500H10" stroke="#000" /></Icon></WindowButton>
      <WindowButton aria-label="Close"><Icon size={14} box={14}><path d="M1.500 1.500 12.500 12.500M12.500 1.500 1.500 12.500" stroke="#000" /></Icon></WindowButton>
    </TitleBar>
    <MenuBar aria-label="Main menu">
      {menus.map((m) => <MenuButton key={m}>{m}</MenuButton>)}
    </MenuBar>

    <Dock>
      <DockRow>
        <Strip><Grip /><Tools items={fileTools} /></Strip>
        <Strip $offset={130}><Grip /><Tools items={viewTools} /></Strip>
      </DockRow>
      <DockRow>
        <Strip><Grip /><Tools items={editTools} /></Strip>
        <Strip $offset={121}><Grip /><Tools items={designTools} /></Strip>
      </DockRow>
    </Dock>

    <TabRow>
      <TabSlope aria-hidden="true">
        <path d="M0 25 24 0V31H0Z" fill="url(#tab)" />
        <path d="M0 25 24 .5" stroke="#659bb8" />
      </TabSlope>
      <Tab>
        <Icon size={20}>{icons.schematic}</Icon>
        <TabLabel>Schematic Capture</TabLabel>
        <TabClose aria-label="Close tab"><Icon size={16} box={16}><path d="M1.500 1.500 14.500 14.500M14.500 1.500 1.500 14.500" stroke="#555" strokeWidth="1.800" /></Icon></TabClose>
      </Tab>
      <TabRule />
    </TabRow>

    <Workspace>
      <ToolColumns>
        <ToolColumn><Grip $wide /><Tools items={modeTools} across /></ToolColumn>
        <OrientColumn>
          <Grip $wide />
          <ToolButton aria-label="Rotate clockwise"><Icon>{icons.clockwise}</Icon></ToolButton>
          <ToolButton aria-label="Rotate anti-clockwise"><Icon>{icons.anticlockwise}</Icon></ToolButton>
          <AngleInput aria-label="Rotation angle" defaultValue="0°" />
          <Divider $across />
          <ToolButton aria-label="Mirror horizontally"><Icon>{icons.mirrorX}</Icon></ToolButton>
          <ToolButton aria-label="Mirror vertically"><Icon>{icons.mirrorY}</Icon></ToolButton>
        </OrientColumn>
      </ToolColumns>
      <SidePanel>
        <OverviewMap />
        <Selector>
          <SelectorTitle>PROBES</SelectorTitle>
          <ProbeList>
            <li><Probe $on>VOLTAGE</Probe></li>
            <li><Probe>CURRENT</Probe></li>
            <li><Probe>TAPE</Probe></li>
          </ProbeList>
        </Selector>
      </SidePanel>
      <Canvas><SchematicSheet /></Canvas>
    </Workspace>

    <StatusBar>
      <StatusPart $width={366}>
        <Grip />
        <SimButton aria-label="Run the simulation"><Icon><path d="M.500.500 23.500 12 .500 23.500Z" fill="url(#sim)" /></Icon></SimButton>
        <SimButton aria-label="Step the simulation"><Icon><path d="M0 .5H3.500V23.500H0ZM7 .5 23.500 12 7 23.500Z" fill="url(#sim)" /></Icon></SimButton>
        <SimButton aria-label="Pause the simulation"><Icon><path d="M4 .5H10V23.500H4ZM14 .5H20V23.500H14Z" fill="url(#sim)" /></Icon></SimButton>
        <SimButton aria-label="Stop the simulation"><Icon><path d="M0 .5H24V23.500H0Z" fill="url(#sim)" /></Icon></SimButton>
        <Divider />
        <Messages>
          <Icon>
            <circle cx="12" cy="12" r="11.500" fill="#19a51d" />
            <circle cx="12" cy="10" r="9" fill="#35c737" />
            <text x="12" y="20" textAnchor="middle" fontFamily="Liberation Serif" fontWeight="700" fontSize="22" fill="#fff">i</text>
          </Icon>
          12 Message(s)
        </Messages>
      </StatusPart>
      <StatusPart $width={412}><Grip /><StatusText>ROOT - Root sheet 1</StatusText></StatusPart>
      <StatusPart $grow>
        <Grip />
        <StatusText>
          <Coordinate $width={12}>x:</Coordinate>
          <Coordinate $width={60} $right>-3600.0</Coordinate>
          <Coordinate $width={16} $right>y:</Coordinate>
          <Coordinate $width={63} $right>-4100.0</Coordinate>
          <Coordinate $width={30} $right $blue>dist:</Coordinate>
          <Coordinate $width={63} $right $blue>5456.2</Coordinate>
          <Unit>th</Unit>
        </StatusText>
      </StatusPart>
    </StatusBar>

    <Taskbar aria-label="Taskbar">
      <TaskButton aria-label="Start"><Icon size={20} box={20}><path d="M0 3 8.500 1.800V9.500H0ZM9.500 1.600 20 0V9.500H9.500ZM0 10.500H8.500V18.200L0 17ZM9.500 10.500H20V20L9.500 18.400Z" fill="#fff" /></Icon></TaskButton>
      <TaskButton aria-label="Search"><Icon size={22} box={22}><circle cx="13" cy="9" r="7" stroke="#fff" strokeWidth="1.300" /><path d="M8 14 1 21" stroke="#fff" strokeWidth="1.300" /></Icon></TaskButton>
      <TaskButton aria-label="Task view"><Icon size={22} box={22}><path d="M1.500 1V4.500H14.500V1M1.500 7.500H14.500V15.500H1.500ZM1.500 21V18.500H14.500V21M19.500 1V21" stroke="#fff" /><path d="M18 7H21V10H18Z" fill="#fff" /></Icon></TaskButton>
      <AppGroup>
        <TaskButton $app $open aria-label="File Explorer">
          <Icon size={28} box={28}>
            <path d="M0 3Q0 2 1 2H11L14 5V9H0Z" fill="#e8a211" />
            <path d="M0 6H12L14 4H28V25H0Z" fill="#ffd25c" />
            <path d="M5 25V17Q5 14 8 14H20Q23 14 23 17V25H18V20H10V25Z" fill="#3b97da" />
          </Icon>
        </TaskButton>
        <TaskButton $app aria-label="Snipping Tool">
          <Icon size={30} box={30}>
            <ellipse cx="13" cy="14" rx="12.500" ry="6" transform="rotate(-20 13 14)" fill="#7c8184" />
            <ellipse cx="14" cy="9.500" rx="12.500" ry="7" transform="rotate(-20 14 9)" fill="#f4f4f4" stroke="#d02a2a" strokeWidth="1.300" />
            <path d="M14 4 18 17M17 18 6 13" stroke="#888" strokeWidth="1.500" />
            <ellipse cx="23" cy="18" rx="5.500" ry="3" transform="rotate(15 23 18)" stroke="#2187c8" strokeWidth="2" />
            <ellipse cx="17" cy="23" rx="3" ry="5.500" transform="rotate(15 17 23)" stroke="#2187c8" strokeWidth="2" />
          </Icon>
        </TaskButton>
        <TaskButton $app $open aria-label="Circuit debugger">
          <Icon size={28} box={28}>
            <path d="M3 7 9 9 10 3 12 9 17 12M3 13 10 12M6 20 12 16M9 27 12 20M20 11 26 14 24 17M19 21 22 25M5 5 8 4" stroke="#000" strokeWidth="3" />
            <path d="M3 7 9 9 10 3M3 13 10 12M9 27 11 20M22 10 26 14" stroke="#7a8084" strokeWidth=".8" />
            <circle cx="17" cy="17" r="5.500" fill="#e01414" stroke="#000" />
            <path d="M13 15Q17 12 20 15M14 19Q17 22 20 18M15 16 18 18" stroke="#500" />
          </Icon>
        </TaskButton>
        <TaskButton $app $open aria-label="GitHub Desktop">
          <Icon size={28} box={28}>
            <circle cx="14" cy="14" r="14" fill="#7d35a0" />
            <circle cx="14" cy="14" r="10" fill="#f5f0f8" />
            <path d="M8.500 8 11.500 9.500Q14 9 16.500 9.500L19.500 8Q20.300 10 19.800 11.500C22 14.500 20.500 18.500 16 19Q17 20 17 24H11V21.500C8.500 22 8 20.500 7 19.500 8.500 19.500 9 21 11 20.500Q11 19.500 12 19C7.500 18.500 6 14.500 8.200 11.500Q7.700 10 8.500 8Z" fill="#53217a" />
          </Icon>
        </TaskButton>
        <TaskButton $app $open $active aria-label="Proteus 8 Professional">
          <Icon size={30} box={30}>
            <g stroke="#9ba2a6" strokeWidth="1">
              <ellipse cx="15" cy="15" rx="14" ry="4.500" />
              <ellipse cx="15" cy="15" rx="12" ry="4" transform="rotate(52 15 15)" />
              <ellipse cx="15" cy="15" rx="12" ry="4" transform="rotate(-52 15 15)" />
            </g>
            <circle cx="15" cy="14" r="5.500" fill="url(#ball)" />
            <g fill="#d59f35">
              <circle cx="8" cy="6" r="1.700" /><circle cx="23" cy="6" r="1.700" /><circle cx="8" cy="24" r="1.700" /><circle cx="23" cy="24" r="1.700" />
            </g>
          </Icon>
        </TaskButton>
      </AppGroup>
      <Tray>
        <TrayButton $width={150}>
          <Icon><path d="M14 0C26 4 26 20 14 23.500 8 25 3 22 1 17 10 19 17 13 14 0Z" fill="url(#moon)" /></Icon>
          -4°C&nbsp; Ясно
        </TrayButton>
        <TrayButton $width={30} aria-label="Show hidden icons"><Icon size={18} box={18}><path d="M1 13 9 5 17 13" stroke="#fff" strokeWidth="1.300" /></Icon></TrayButton>
        <TrayButton $width={28} aria-label="Battery"><Icon size={20} box={20}><path d="M.500 5.500H17.500V14.500H.500Z" stroke="#fff" /><path d="M2 7H12V13H2ZM18 8H19.500V12H18Z" fill="#fff" /></Icon></TrayButton>
        <TrayButton $width={32} aria-label="Network"><Icon size={20} box={20}><path d="M6 3.500H19.500V14.500H4V8M.500 2.500H4.500V6.500H.500ZM2.500 6V9M11.500 15V18M7 18.500H16" stroke="#fff" /></Icon></TrayButton>
        <TrayButton $width={24} aria-label="Volume"><Icon size={22} box={22}><path d="M1.500 8.500H4L8.500 4.500V17.500L4 13.500H1.500ZM11 8.500Q13 11 11 13.500M14 6Q18 11 14 16M17 4Q22 11 17 18" stroke="#fff" strokeWidth="1.100" /></Icon></TrayButton>
        <TrayButton $width={58}>ENG</TrayButton>
        <TrayButton $width={70}>22:44<br />28.02.2022</TrayButton>
        <TrayButton $width={70} aria-label="Notifications"><Icon size={22} box={22}><path d="M1.500 1.500H20.500V17.500H14L11 20.500 8 17.500H1.500Z" stroke="#fff" strokeWidth="1.200" /></Icon></TrayButton>
        <ShowDesktop aria-label="Show desktop" />
      </Tray>
    </Taskbar>
  </Shell>
);

export default App;
